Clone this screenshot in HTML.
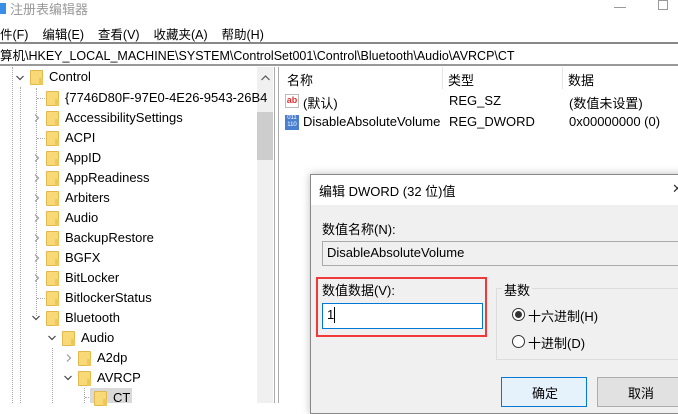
<!DOCTYPE html>
<html><head><meta charset="utf-8"><style>
*{margin:0;padding:0;box-sizing:border-box}
body{width:678px;height:403px;overflow:hidden;background:#fff;font-family:"Liberation Sans","Noto Sans CJK SC",sans-serif;font-size:13px;color:#000;position:relative}
.a{position:absolute;white-space:nowrap}
.f{position:absolute;width:13px;height:15px;background:#f8d978;border:1px solid #e2b84a;border-radius:1px}
.f:after{content:"";position:absolute;right:-1px;bottom:-1px;width:4px;height:7px;background:#f0c55a}
.r{position:absolute;width:8px;height:8px}
.d{position:absolute;width:8px;height:8px}
.vd{position:absolute;border-left:1px dotted #aaa}
.hd{position:absolute;border-top:1px dotted #aaa;width:8px}
</style></head><body>
<svg width="0" height="0" style="position:absolute"><defs>
<symbol id="cr" viewBox="0 0 8 8"><path d="M2 0.5 L5.5 4 L2 7.5" fill="none" stroke="#999" stroke-width="1.2"/></symbol>
<symbol id="cd" viewBox="0 0 8 8"><path d="M0.5 2 L4 5.5 L7.5 2" fill="none" stroke="#444" stroke-width="1.2"/></symbol>
</defs></svg>
<!-- title -->
<div class="a" style="left:0;top:3px;width:6px;height:11px;background:#3a8ee6"></div>
<div class="a" style="left:10px;top:-1px;font-size:13px;color:#999">注册表编辑器</div>
<div class="a" style="left:614px;top:7px;width:12px;border-top:1px solid #999"></div>
<div class="a" style="left:658px;top:0px;width:10px;height:10px;border:1px solid #999"></div>
<!-- menu -->
<div class="a" style="left:0;top:24px;font-size:12.5px">件(F)&nbsp;&nbsp;&nbsp;&nbsp;编辑(E)&nbsp;&nbsp;&nbsp;&nbsp;查看(V)&nbsp;&nbsp;&nbsp;&nbsp;收藏夹(A)&nbsp;&nbsp;&nbsp;&nbsp;帮助(H)</div>
<!-- address -->
<div class="a" style="left:0;top:42px;width:678px;height:24px;border-top:2px solid #888;border-bottom:2px solid #999"></div>
<div class="a" style="left:0;top:45px;font-size:12.5px">算机\HKEY_LOCAL_MACHINE\SYSTEM\ControlSet001\Control\Bluetooth\Audio\AVRCP\CT</div>
<!-- tree -->
<div class="a" style="left:257px;top:67px;width:16px;height:336px;background:#f0f0f0"></div>
<div class="a" style="left:257px;top:112px;width:16px;height:48px;background:#cdcdcd"></div>
<svg class="a" style="left:261px;top:75px" width="9" height="6"><path d="M0.5 5 L4.5 1 L8.5 5" fill="none" stroke="#555" stroke-width="1.2"/></svg>
<div class="a" style="left:274px;top:67px;width:1px;height:336px;background:#aaa"></div>
<div class="a" style="left:278px;top:67px;width:1px;height:336px;background:#aaa"></div>
<div class="vd" style="left:12px;top:67px;height:336px"></div>
<div class="vd" style="left:20px;top:87px;height:316px"></div>
<div class="vd" style="left:36px;top:88px;height:228px"></div>
<div class="vd" style="left:52px;top:348px;height:55px"></div>
<div class="vd" style="left:84px;top:388px;height:15px"></div>
<div class="hd" style="left:37px;top:98px"></div>
<div class="hd" style="left:37px;top:138px"></div>
<div class="hd" style="left:37px;top:298px"></div>
<div class="hd" style="left:85px;top:397px"></div>

<svg class="d" style="left:16px;top:74px"><use href="#cd"/></svg><div class="f" style="left:30px;top:70px"></div><div class="a" style="left:49px;top:69px">Control</div>
<div class="f" style="left:46px;top:91px"></div><div class="a" style="left:65px;top:90px">{7746D80F-97E0-4E26-9543-26B4</div>
<svg class="r" style="left:33px;top:114px"><use href="#cr"/></svg><div class="f" style="left:46px;top:111px"></div><div class="a" style="left:65px;top:110px">AccessibilitySettings</div>
<div class="f" style="left:46px;top:131px"></div><div class="a" style="left:65px;top:130px">ACPI</div>
<svg class="r" style="left:33px;top:154px"><use href="#cr"/></svg><div class="f" style="left:46px;top:151px"></div><div class="a" style="left:65px;top:150px">AppID</div>
<svg class="r" style="left:33px;top:174px"><use href="#cr"/></svg><div class="f" style="left:46px;top:171px"></div><div class="a" style="left:65px;top:170px">AppReadiness</div>
<svg class="r" style="left:33px;top:194px"><use href="#cr"/></svg><div class="f" style="left:46px;top:191px"></div><div class="a" style="left:65px;top:190px">Arbiters</div>
<svg class="r" style="left:33px;top:214px"><use href="#cr"/></svg><div class="f" style="left:46px;top:211px"></div><div class="a" style="left:65px;top:210px">Audio</div>
<svg class="r" style="left:33px;top:234px"><use href="#cr"/></svg><div class="f" style="left:46px;top:231px"></div><div class="a" style="left:65px;top:230px">BackupRestore</div>
<svg class="r" style="left:33px;top:254px"><use href="#cr"/></svg><div class="f" style="left:46px;top:251px"></div><div class="a" style="left:65px;top:250px">BGFX</div>
<svg class="r" style="left:33px;top:274px"><use href="#cr"/></svg><div class="f" style="left:46px;top:271px"></div><div class="a" style="left:65px;top:270px">BitLocker</div>
<div class="f" style="left:46px;top:291px"></div><div class="a" style="left:65px;top:290px">BitlockerStatus</div>
<svg class="d" style="left:32px;top:314px"><use href="#cd"/></svg><div class="f" style="left:46px;top:311px"></div><div class="a" style="left:65px;top:310px">Bluetooth</div>
<svg class="d" style="left:48px;top:334px"><use href="#cd"/></svg><div class="f" style="left:62px;top:331px"></div><div class="a" style="left:81px;top:330px">Audio</div>
<svg class="r" style="left:65px;top:354px"><use href="#cr"/></svg><div class="f" style="left:78px;top:351px"></div><div class="a" style="left:97px;top:350px">A2dp</div>
<svg class="d" style="left:64px;top:374px"><use href="#cd"/></svg><div class="f" style="left:78px;top:371px"></div><div class="a" style="left:97px;top:370px">AVRCP</div>
<div class="a" style="left:90px;top:388px;width:42px;height:15px;background:#d9d9d9"></div>
<div class="f" style="left:94px;top:391px"></div><div class="a" style="left:113px;top:390px">CT</div>
<!-- right list -->
<div class="a" style="left:287px;top:70px">名称</div>
<div class="a" style="left:442px;top:67px;width:1px;height:22px;background:#e5e5e5"></div>
<div class="a" style="left:448px;top:70px">类型</div>
<div class="a" style="left:562px;top:67px;width:1px;height:22px;background:#e5e5e5"></div>
<div class="a" style="left:568px;top:70px">数据</div>
<div class="a" style="left:285px;top:94px;width:14px;height:14px;border:1px solid #bbb;background:#fff;color:#d33;font-size:9px;font-weight:bold;line-height:11px;text-align:center">ab</div>
<div class="a" style="left:303px;top:93px">(默认)</div>
<div class="a" style="left:449px;top:93px">REG_SZ</div>
<div class="a" style="left:569px;top:93px">(数值未设置)</div>
<div class="a" style="left:285px;top:115px;width:14px;height:15px;background:#4a7fcf;color:#fff;font-size:6px;line-height:7px;text-align:center">011<br>110</div>
<div class="a" style="left:303px;top:114px">DisableAbsoluteVolume</div>
<div class="a" style="left:449px;top:114px">REG_DWORD</div>
<div class="a" style="left:569px;top:114px">0x00000000 (0)</div>
<!-- dialog -->
<div class="a" style="left:310px;top:174px;width:380px;height:240px;background:#f0f0f0;border:1px solid #888;box-shadow:0 0 8px rgba(0,0,0,.25)"></div>
<div class="a" style="left:311px;top:175px;width:370px;height:30px;background:#fff"></div>
<div class="a" style="left:319px;top:181px">编辑 DWORD (32 位)值</div>
<div class="a" style="left:672px;top:181px;color:#333">✕</div>
<div class="a" style="left:322px;top:219px">数值名称(N):</div>
<div class="a" style="left:322px;top:241px;width:370px;height:25px;border:1px solid #aaa;background:#f0f0f0"></div>
<div class="a" style="left:327px;top:245px">DisableAbsoluteVolume</div>
<div class="a" style="left:316px;top:277px;width:171px;height:60px;border:2px solid #f03a3a"></div>
<div class="a" style="left:322px;top:280px">数值数据(V):</div>
<div class="a" style="left:322px;top:303px;width:161px;height:26px;border:1px solid #0078d7;background:#fff"></div>
<div class="a" style="left:327px;top:307px">1</div>
<div class="a" style="left:334px;top:307px;width:1px;height:16px;background:#000"></div>
<div class="a" style="left:496px;top:288px;width:190px;height:72px;border:1px solid #dcdcdc"></div>
<div class="a" style="left:502px;top:280px;background:#f0f0f0;padding:0 2px">基数</div>
<div class="a" style="left:512px;top:308px;width:13px;height:13px;border:1px solid #333;border-radius:50%;background:#fff"></div>
<div class="a" style="left:515px;top:311px;width:7px;height:7px;border-radius:50%;background:#333"></div>
<div class="a" style="left:528px;top:306px">十六进制(H)</div>
<div class="a" style="left:512px;top:335px;width:13px;height:13px;border:1px solid #333;border-radius:50%;background:#fff"></div>
<div class="a" style="left:528px;top:333px">十进制(D)</div>
<div class="a" style="left:501px;top:377px;width:86px;height:30px;border:1px solid #0078d7;background:#e5f1fb"></div>
<div class="a" style="left:532px;top:383px">确定</div>
<div class="a" style="left:597px;top:377px;width:90px;height:30px;border:1px solid #adadad;background:#e1e1e1"></div>
<div class="a" style="left:628px;top:383px">取消</div>
</body></html>
